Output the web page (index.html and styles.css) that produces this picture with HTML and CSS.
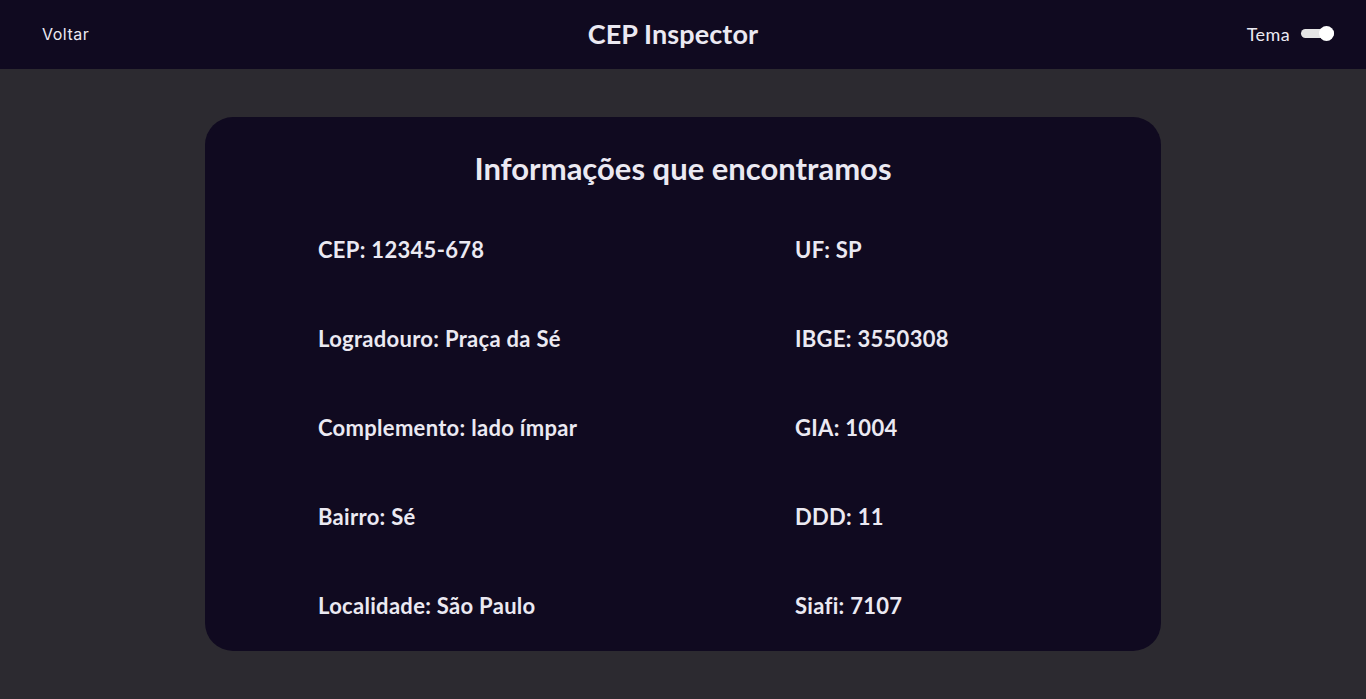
FILE: index.html
```html
<!DOCTYPE html>
<html lang="pt-BR">
<head>
<meta charset="utf-8">
<title>CEP Inspector</title>
<link rel="stylesheet" href="styles.css">
</head>
<body>
<header class="topbar">
  <a class="back" href="#">Voltar</a>
  <h1 class="brand">CEP Inspector</h1>
  <div class="theme">
    <span class="theme-label">Tema</span>
    <span class="switch"><span class="knob"></span></span>
  </div>
</header>
<main class="page">
  <section class="card">
    <h2 class="card-title">Informações que encontramos</h2>
    <div class="grid">
      <p class="item">CEP: 12345-678</p>
      <p class="item">UF: SP</p>
      <p class="item">Logradouro: Praça da Sé</p>
      <p class="item">IBGE: 3550308</p>
      <p class="item">Complemento: lado ímpar</p>
      <p class="item">GIA: 1004</p>
      <p class="item">Bairro: Sé</p>
      <p class="item">DDD: 11</p>
      <p class="item">Localidade: São Paulo</p>
      <p class="item">Siafi: 7107</p>
    </div>
  </section>
</main>
</body>
</html>
```

FILE: styles.css
```css
* { box-sizing: border-box; }
html, body { margin: 0; padding: 0; }
body {
  background: #2c2a30;
  color: #ebe9f2;
  font-family: Lato, "Noto Sans", sans-serif;
  min-height: 699px;
}
.topbar {
  height: 69px;
  background: #100a20;
  display: flex;
  align-items: center;
  justify-content: space-between;
  padding: 0 32px 2px 42px;
}
.back {
  color: #ebe9f2;
  text-decoration: none;
  font-family: Inter, sans-serif;
  font-size: 16px;
  letter-spacing: 0.5px;
  font-weight: 400;
}
.brand {
  margin: 0 0 0 10px;
  font-size: 27px;
  font-weight: 700;
  letter-spacing: 0.1px;
}
.theme {
  display: flex;
  align-items: center;
  gap: 11px;
}
.theme-label {
  font-size: 18px;
  letter-spacing: 0.4px;
}
.switch {
  position: relative;
  width: 33px;
  height: 9px;
  border-radius: 5px;
  background: #e6e6e6;
}
.knob {
  position: absolute;
  right: 0;
  top: -3px;
  width: 15px;
  height: 15px;
  border-radius: 50%;
  background: #ffffff;
}
.page {
  padding: 48px 0;
  display: flex;
  justify-content: center;
}
.card {
  width: 956px;
  height: 534px;
  background: #100a20;
  border-radius: 28px;
  padding: 33px 0 0 113px;
}
.card-title {
  margin: 0 0 0 -113px;
  text-align: center;
  font-size: 31px;
  font-weight: 700;
  line-height: 37px;
}
.grid {
  margin-top: 51px;
  display: grid;
  grid-template-columns: 477px 1fr;
  row-gap: 65px;
}
.item {
  margin: 0;
  font-size: 22px;
  font-weight: 700;
  letter-spacing: 0.3px;
  line-height: 24px;
}
```
